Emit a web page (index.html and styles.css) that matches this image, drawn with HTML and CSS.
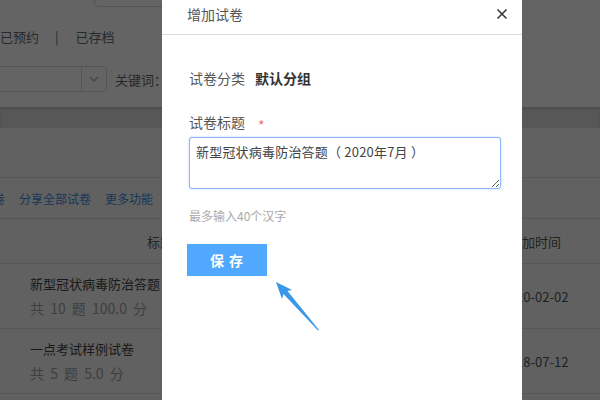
FILE: index.html
```html
<!DOCTYPE html>
<html lang="zh-CN">
<head>
  <meta charset="UTF-8">
  <title>增加试卷</title>
  <link rel="stylesheet" href="styles.css">
</head>
<body>
  <div class="page">
    <div class="head">
      <div class="search-row">
        <span class="search-label">试卷名称：</span>
        <span class="search-box"></span>
      </div>
      <div class="tabs">
        <span>已预约</span><span class="sep">|</span><span>已存档</span>
      </div>
      <div class="filter">
        <div class="select">
          <span class="select-arrow">
            <svg width="10" height="6" viewBox="0 0 10 6"><path d="M1 1l4 4 4-4" fill="none" stroke="#bbb" stroke-width="1.6"/></svg>
          </span>
        </div>
        <span class="kw">关键词：</span>
      </div>
    </div>

    <div class="gap"></div>

    <div class="panel">
      <div class="panel-title"></div>
      <div class="toolbar">
        <a>导入试卷</a><a>分享全部试卷</a><a>更多功能</a>
      </div>
      <div class="thead">
        <span class="c-title">标题</span>
        <span class="c-time">添加时间</span>
      </div>
      <div class="trow">
        <div class="c-name">
          <div class="name">新型冠状病毒防治答题（2020年7月）</div>
          <div class="meta">共 10 题 100.0 分</div>
        </div>
        <span class="c-time">2020-02-02</span>
      </div>
      <div class="trow">
        <div class="c-name">
          <div class="name">一点考试样例试卷</div>
          <div class="meta">共 5 题 5.0 分</div>
        </div>
        <span class="c-time">2018-07-12</span>
      </div>
    </div>
  </div>

  <div class="mask"></div>

  <div class="modal">
    <div class="modal-head">
      <span class="modal-title">增加试卷</span>
      <svg class="close" width="12" height="12" viewBox="0 0 12 12"><path d="M1.5 1.5l9 9M10.5 1.5l-9 9" stroke="#333" stroke-width="1.5"/></svg>
    </div>
    <div class="modal-body">
      <div class="field">
        <span class="label">试卷分类</span>
        <span class="value">默认分组</span>
      </div>
      <div class="field-label">
        <span class="label">试卷标题</span><span class="req">*</span>
      </div>
      <textarea class="title-input">新型冠状病毒防治答题（ 2020年7月 ）</textarea>
      <div class="hint">最多输入40个汉字</div>
      <button class="save">保 存</button>
    </div>
  </div>

  <svg class="pointer" width="60" height="60" viewBox="0 0 60 60">
    <polygon points="6,2 22,10 17.5,11 49,50 48,50.5 13.5,14 12,19" fill="#3b97e8"/>
  </svg>
</body>
</html>
```

FILE: styles.css
```css
body {
  margin: 0;
  font-family: "Noto Sans CJK SC", "Noto Sans", sans-serif;
  font-size: 13px;
  color: #444;
  background: #f7f7f7;
  overflow: hidden;
  width: 600px;
  height: 400px;
}

.page {
  width: 600px;
}

.head {
  background: #fff;
  height: 107px;
  overflow: hidden;
}
.search-row {
  display: flex;
  align-items: flex-end;
  height: 33px;
  margin-top: -26px;
}
.search-label {
  margin-left: 20px;
  line-height: 20px;
  margin-bottom: 4px;
  color: #666;
}
.search-box {
  margin-left: 9px;
  width: 300px;
  height: 31px;
  border: 1px solid #d6d6d6;
  border-radius: 4px;
}
.tabs {
  display: flex;
  margin-top: 20px;
  line-height: 20px;
  color: #6a6a6a;
}
.tabs .sep {
  color: #4a78b8;
  padding: 0 17px 0 16px;
}
.filter {
  display: flex;
  align-items: center;
  margin-top: 19px;
}
.select {
  margin-left: -60px;
  width: 165px;
  height: 24px;
  border: 1px solid #d9d9d9;
  border-radius: 4px;
  display: flex;
  justify-content: flex-end;
}
.select-arrow {
  width: 24px;
  border-left: 1px solid #d9d9d9;
  display: flex;
  align-items: center;
  justify-content: center;
}
.kw {
  margin-left: 8px;
  color: #666;
}

.gap {
  height: 21px;
  background: #dfdfdf;
  box-shadow: inset 0 2px 3px rgba(0, 0, 0, 0.12);
}

.panel {
  background: #f8f8f8;
}
.panel-title {
  height: 49px;
  border-bottom: 1px solid #dcdcdc;
}
.toolbar {
  display: flex;
  gap: 14px;
  height: 40px;
  align-items: center;
  margin-left: -43px;
  font-size: 12px;
  border-bottom: 1px solid #dcdcdc;
}
.toolbar a {
  color: #3d8be0;
}
.thead, .trow {
  display: grid;
  grid-template-columns: 1fr 110px;
  padding-right: 10px;
  align-items: center;
  border-bottom: 1px solid #dcdcdc;
}
.thead {
  height: 44px;
  color: #555;
}
.c-title {
  padding-left: 147px;
}
.c-time {
  text-align: center;
  color: #555;
}
.trow {
  height: 64px;
}
.c-name {
  padding-left: 30px;
  display: flex;
  flex-direction: column;
  gap: 4px;
}
.name, .meta {
  line-height: 20px;
}
.meta {
  color: #a0a0a0;
  font-size: 14px;
  word-spacing: 3px;
}

.mask {
  position: fixed;
  inset: 0;
  background: rgba(0, 0, 0, 0.608);
}

.modal {
  position: absolute;
  left: 162px;
  top: -7px;
  width: 360px;
  height: 420px;
  background: #fff;
  color: #555;
  font-size: 14px;
}
.modal-head {
  height: 41px;
  border-bottom: 1px solid #ddd;
  display: flex;
  align-items: center;
  justify-content: space-between;
  padding: 0 14px 0 25px;
}
.modal-title {
  color: #555;
}
.modal-body {
  padding: 33px 21px 0 27px;
  display: flex;
  flex-direction: column;
  align-items: flex-start;
}
.field {
  display: flex;
  gap: 10px;
  line-height: 20px;
}
.field .value {
  color: #333;
  font-weight: bold;
}
.field-label {
  margin-top: 24px;
  height: 20px;
  line-height: 20px;
  display: flex;
}
.req {
  color: #f56c6c;
  font-size: 14px;
  margin-left: 13px;
  line-height: 20px;
  padding-top: 3px;
}
.title-input {
  margin-top: 5px;
  width: 312px;
  height: 52px;
  box-sizing: border-box;
  border: 1px solid #8cb6f6;
  border-radius: 3px;
  box-shadow: 0 0 2px rgba(100, 150, 240, 0.5);
  padding: 4px 6px;
  font-family: inherit;
  font-size: 13px;
  letter-spacing: 0.2px;
  color: #444;
  outline: none;
  resize: vertical;
}
.hint {
  margin-top: 18px;
  font-size: 12px;
  line-height: 18px;
  color: #aaa;
}
.save {
  margin-top: 19px;
  margin-left: -2px;
  width: 80px;
  height: 32px;
  border: none;
  background: #50a8ff;
  color: #fff;
  font-family: inherit;
  font-size: 14px;
  font-weight: bold;
  letter-spacing: 1px;
}

.pointer {
  position: absolute;
  left: 270px;
  top: 280px;
}
```
